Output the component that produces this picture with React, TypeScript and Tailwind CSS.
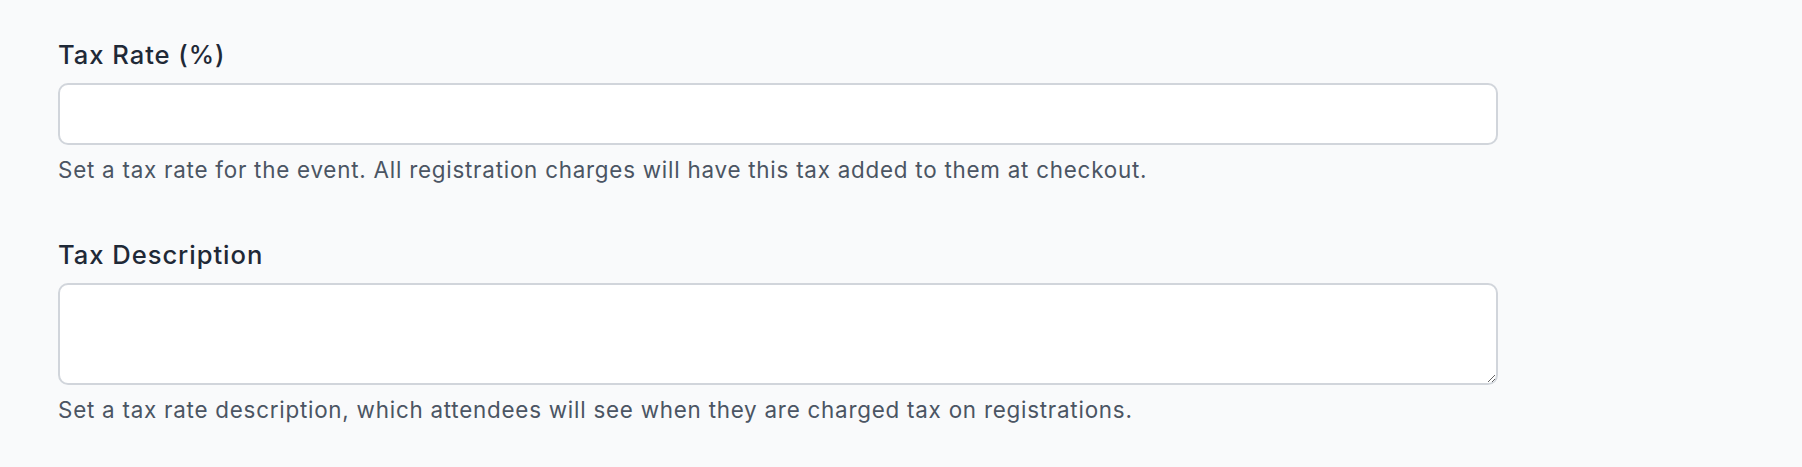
export default function App() {
  return (
    <div
      className="min-h-[467px] bg-[#f9fafb] pl-[58px] pt-[37px]"
      style={{ fontFamily: "Inter, 'Noto Sans', sans-serif" }}
    >
      <div className="w-[1440px]">
        <div>
          <label className="block text-[25.6px] leading-[36px] font-medium tracking-[0.95px] text-[#1f2937]">
            Tax Rate (%)
          </label>
          <input
            type="text"
            className="mt-[10px] block h-[62px] w-full rounded-[10px] border-2 border-[#d1d5db] bg-white px-4 text-[25.6px] outline-none"
          />
          <p className="mt-[9px] text-[22.4px] leading-[32px] tracking-[0.76px] text-[#4b5563]">
            Set a tax rate for the event. All registration charges will have this tax added to them at checkout.
          </p>
        </div>
        <div className="mt-[51px]">
          <label className="block text-[25.6px] leading-[36px] font-medium tracking-[0.95px] text-[#1f2937]">
            Tax Description
          </label>
          <textarea className="mt-[10px] block h-[102px] w-full rounded-[10px] border-2 border-[#d1d5db] bg-white px-4 py-2 text-[25.6px] outline-none" />
          <p className="mt-[9px] text-[22.4px] leading-[32px] tracking-[0.76px] text-[#4b5563]">
            Set a tax rate description, which attendees will see when they are charged tax on registrations.
          </p>
        </div>
      </div>
    </div>
  );
}
